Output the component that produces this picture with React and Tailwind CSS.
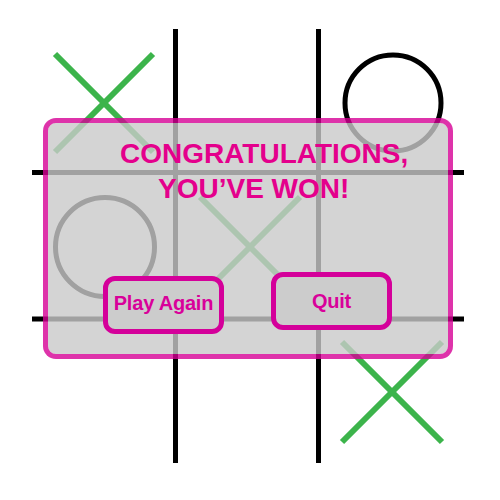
import React from 'react';

const X = ({ cx, cy, r = 49 }) => (
  <g stroke="#3cb44b" strokeWidth="6" strokeLinecap="butt">
    <line x1={cx - r} y1={cy - r} x2={cx + r} y2={cy + r} />
    <line x1={cx + r} y1={cy - r} x2={cx - r} y2={cy + r} />
  </g>
);

const O = ({ cx, cy, r = 48 }) => (
  <circle cx={cx} cy={cy} r={r} fill="none" stroke="#000" strokeWidth="5" />
);

const Board = () => (
  <svg width="500" height="500" viewBox="0 0 500 500" className="block">
    {/* grid */}
    <g stroke="#000" strokeWidth="5">
      <line x1="175.5" y1="29" x2="175.5" y2="463" />
      <line x1="318.5" y1="29" x2="318.5" y2="463" />
      <line x1="32" y1="172.5" x2="464" y2="172.5" />
      <line x1="32" y1="319" x2="464" y2="319" />
    </g>
    <X cx={104} cy={103} />
    <O cx={393} cy={103} r={48} />
    <O cx={105} cy={247} r={49.5} />
    <X cx={250} cy={247} r={50} />
    <X cx={392} cy={392} r={50} />
  </svg>
);

export default function App() {
  return (
    <div className="relative w-[500px] h-[500px] bg-white overflow-hidden" style={{ fontFamily: '"Liberation Sans", Arial, sans-serif' }}>
      <Board />

      {/* win dialog */}
      <div className="absolute left-[43px] top-[118px] w-[410px] h-[241px] rounded-[13px] border-[5px] border-[rgba(214,0,149,0.8)] bg-[rgba(201,201,201,0.8)] bg-clip-padding flex flex-col pt-[13px]">
        <div className="flex flex-col items-start font-bold text-[28px] leading-[35px] text-[#e4008c] whitespace-nowrap">
          <span className="pl-[72px]">CONGRATULATIONS,</span>
          <span className="pl-[110px]">YOU’VE WON!</span>
        </div>

        <div className="flex items-start pl-[55px] gap-[47px] mt-[66px]">
          <button className="mt-[4px] w-[121px] h-[58px] rounded-[12px] border-[5px] border-[#d4009a] bg-[#cccccc] text-[#d9009a] font-bold text-[20px] tracking-[-0.2px] pb-[4px] flex items-center justify-center">
            Play Again
          </button>
          <button className="w-[121px] h-[58px] rounded-[12px] border-[5px] border-[#d4009a] bg-[#cccccc] text-[#d9009a] font-bold text-[20px] tracking-[-0.2px] flex items-center justify-center">
            Quit
          </button>
        </div>
      </div>
    </div>
  );
}
